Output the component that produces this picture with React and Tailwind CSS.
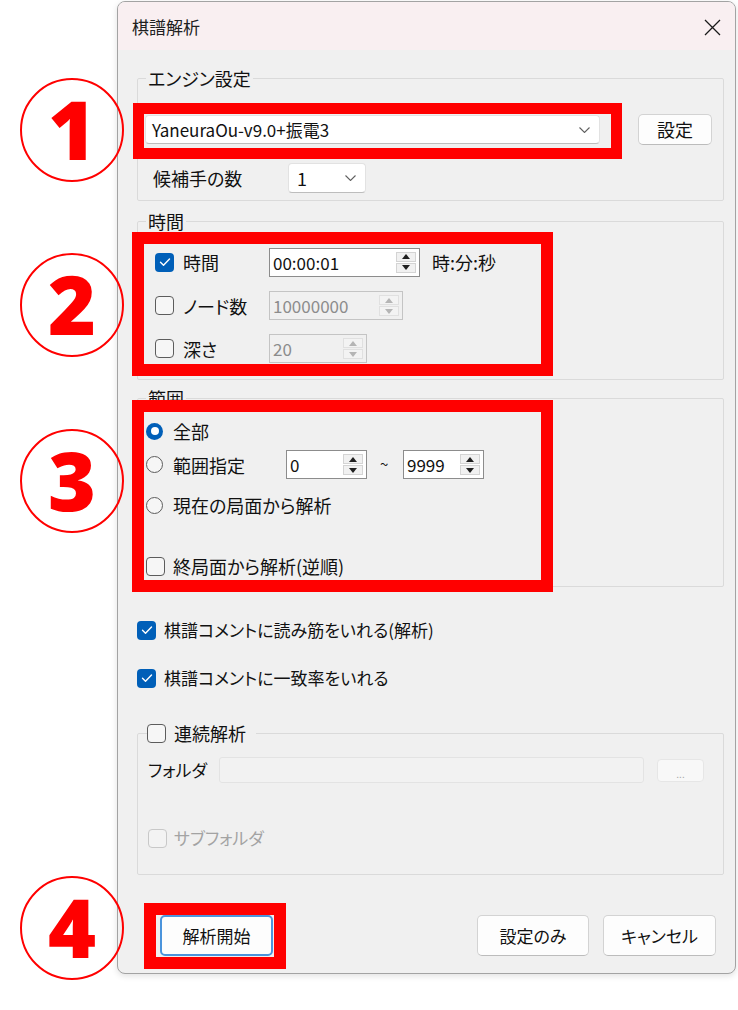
import React from "react";

const jp = "font-['Noto_Sans_CJK_JP','Noto_Sans',sans-serif] [font-feature-settings:'palt']";

function CheckBox({ checked, disabled }) {
  if (checked) {
    return (
      <span className="flex h-[19px] w-[19px] shrink-0 items-center justify-center rounded-[4px] bg-[#005fb8]">
        <svg width="12" height="10" viewBox="0 0 12 10" fill="none">
          <path d="M1.5 5.2l3 3L10.5 2" stroke="white" strokeWidth="1.4" strokeLinecap="round" strokeLinejoin="round" />
        </svg>
      </span>
    );
  }
  return (
    <span
      className={`block h-[19px] w-[19px] shrink-0 rounded-[4px] border ${
        disabled ? "border-[#c8c8c8] bg-[#f3f3f3]" : "border-[#5c5c5c] bg-[#f6f6f6]"
      }`}
    />
  );
}

function Radio({ checked }) {
  if (checked) {
    return (
      <span className="flex h-[17px] w-[17px] shrink-0 items-center justify-center rounded-full bg-[#005fb8]">
        <span className="h-[8px] w-[8px] rounded-full bg-white" />
      </span>
    );
  }
  return <span className="block h-[17px] w-[17px] shrink-0 rounded-full border border-[#5c5c5c] bg-[#f6f6f6]" />;
}

function Arrow({ up, disabled }) {
  return (
    <span
      className={`flex flex-1 items-center justify-center border ${
        disabled ? "border-[#e0e0e0] bg-[#f3f3f3]" : "border-[#d4d4d4] bg-[#f1f1f1]"
      }`}
    >
      <svg width="8" height="5" viewBox="0 0 8 5">
        <path d={up ? "M0 5L4 0L8 5Z" : "M0 0L4 5L8 0Z"} fill={disabled ? "#b5b5b5" : "#202020"} />
      </svg>
    </span>
  );
}

function Spin({ value, w, disabled }) {
  return (
    <div
      className={`flex h-[29px] ${w} items-stretch border ${
        disabled ? "border-[#c4c4c4] bg-[#f0f0f0] text-[#8c8c8c]" : "border-[#8c8c8c] bg-white text-[#111]"
      }`}
    >
      <span className="flex-1 pl-[3px] text-[17px] leading-[27px]">{value}</span>
      <div className="my-[3px] mr-[3px] flex w-[20px] flex-col gap-[1px]">
        <Arrow up disabled={disabled} />
        <Arrow disabled={disabled} />
      </div>
    </div>
  );
}

function Chevron() {
  return (
    <svg width="11" height="6" viewBox="0 0 11 6" fill="none">
      <path d="M0.5 0.5L5.5 5.5L10.5 0.5" stroke="#616161" strokeWidth="1.1" />
    </svg>
  );
}

function Button({ children, w, primary }) {
  return (
    <button
      type="button"
      className={`flex h-[41px] ${w} items-center justify-center rounded-[5px] bg-[#fdfdfd] text-[17px] text-[#111] ${
        primary ? "border-2 border-[#4b94dc]" : "border border-[#d3d3d3] border-b-[#bcbcbc]"
      }`}
    >
      {children}
    </button>
  );
}

function Circled({ n, top }) {
  return (
    <div
      className={`absolute left-[20px] ${top} flex h-[104px] w-[104px] items-center justify-center rounded-full border-[2.5px] border-[#ff0000] pb-[4px] font-['Noto_Sans','DejaVu_Sans',sans-serif] text-[82px] font-black leading-none text-[#ff0000]`}
    >
      {n}
    </div>
  );
}

export default function App() {
  return (
    <div className={`relative h-[1010px] w-[738px] overflow-hidden bg-white text-[#111] ${jp}`}>
      {/* dialog */}
      <div className="ml-[117px] mt-[1px] flex h-[973px] w-[619px] flex-col overflow-hidden rounded-[8px] border border-[#a3a3a3] bg-[#f0f0f0] shadow-[0_2px_6px_rgba(0,0,0,0.12)]">
        <div className="flex h-[48px] shrink-0 items-center justify-between bg-[#f9eff1] pl-[14px] pr-[14px] pt-[2px]">
          <span className="text-[17px] text-[#202020]">棋譜解析</span>
          <svg width="17" height="17" viewBox="0 0 17 17" fill="none">
            <path d="M1 1L16 16M16 1L1 16" stroke="#1a1a1a" strokeWidth="1.3" />
          </svg>
        </div>

        <div className="flex flex-col pl-[19px] pr-[11px] pt-[18px]">
          {/* エンジン設定 */}
          <fieldset className="rounded-[2px] border border-[#dadada] px-[7px] pb-[7px]">
            <legend className="ml-[1px] px-[2px] text-[18px] leading-[20px]">エンジン設定</legend>
            <div className="mt-[26px] flex items-center">
              <div className="flex h-[29px] w-[455px] items-center justify-between rounded-[4px] border border-[#e2e2e2] border-b-[#bdbdbd] bg-white pl-[6px] pr-[9px]">
                <span className="text-[17px] leading-none">YaneuraOu-v9.0+振電3</span>
                <Chevron />
              </div>
              <div className="ml-[38px] flex h-[31px] w-[74px] items-center justify-center rounded-[5px] border border-[#d3d3d3] border-b-[#bcbcbc] bg-[#fdfdfd] text-[18px]">
                設定
              </div>
            </div>
            <div className="mt-[18px] flex items-center">
              <span className="ml-[8px] w-[135px] text-[18px] leading-[20px]">候補手の数</span>
              <div className="flex h-[30px] w-[78px] items-center justify-between rounded-[4px] border border-[#e2e2e2] border-b-[#bdbdbd] bg-white pl-[8px] pr-[9px]">
                <span className="text-[18px] leading-none">1</span>
                <Chevron />
              </div>
            </div>
          </fieldset>

          {/* 時間 */}
          <fieldset className="mt-[10px] rounded-[2px] border border-[#dadada] px-[7px] pb-[16px]">
            <legend className="ml-[1px] px-[2px] text-[18px] leading-[20px]">時間</legend>
            <div className="mt-[16px] flex h-[30px] items-center">
              <div className="ml-[10px] flex w-[114px] items-center gap-[9px]">
                <CheckBox checked />
                <span className="text-[18px] leading-[20px]">時間</span>
              </div>
              <Spin value="00:00:01" w="w-[151px]" />
              <span className="ml-[12px] text-[18px] leading-[20px]">時:分:秒</span>
            </div>
            <div className="mt-[14px] flex items-center">
              <div className="ml-[10px] flex w-[114px] items-center gap-[9px]">
                <CheckBox />
                <span className="text-[18px] leading-[20px]">ノード数</span>
              </div>
              <Spin value="10000000" w="w-[134px]" disabled />
            </div>
            <div className="mt-[14px] flex items-center">
              <div className="ml-[10px] flex w-[114px] items-center gap-[9px]">
                <CheckBox />
                <span className="text-[18px] leading-[20px]">深さ</span>
              </div>
              <Spin value="20" w="w-[98px]" disabled />
            </div>
          </fieldset>

          {/* 範囲 */}
          <fieldset className="mt-[8px] rounded-[2px] border border-[#dadada] px-[7px] pb-[10px]">
            <legend className="ml-[1px] px-[2px] text-[18px] leading-[20px]">範囲</legend>
            <div className="ml-[1px] mt-[13px] flex h-[20px] items-center gap-[10px]">
              <Radio checked />
              <span className="text-[18px] leading-[20px]">全部</span>
            </div>
            <div className="ml-[1px] mt-[9px] flex items-center">
              <div className="flex w-[140px] items-center gap-[10px]">
                <Radio />
                <span className="text-[18px] leading-[20px]">範囲指定</span>
              </div>
              <Spin value="0" w="w-[81px]" />
              <span className="w-[36px] pl-[13px] text-[15px]">~</span>
              <Spin value="9999" w="w-[81px]" />
            </div>
            <div className="ml-[1px] mt-[16px] flex h-[20px] items-center gap-[10px]">
              <Radio />
              <span className="text-[18px] leading-[20px]">現在の局面から解析</span>
            </div>
            <div className="ml-[1px] mt-[41px] flex h-[20px] items-center gap-[8px]">
              <CheckBox />
              <span className="text-[18px] leading-[20px]">終局面から解析(逆順)</span>
            </div>
          </fieldset>

          <div className="mt-[33px] flex h-[20px] items-center gap-[8px]">
            <CheckBox checked />
            <span className="text-[17px] leading-[20px]">棋譜コメントに読み筋をいれる(解析)</span>
          </div>
          <div className="mt-[28px] flex h-[20px] items-center gap-[8px]">
            <CheckBox checked />
            <span className="text-[17px] leading-[20px]">棋譜コメントに一致率をいれる</span>
          </div>

          {/* 連続解析 */}
          <fieldset className="mt-[35px] h-[152px] rounded-[2px] border border-[#dadada] pl-[10px]">
            <legend className="-ml-[1px] flex h-[20px] items-center gap-[8px] pr-[10px]">
              <CheckBox />
              <span className="text-[18px] leading-[20px]">連続解析</span>
            </legend>
            <div className="mt-[14px] flex items-center">
              <span className="w-[71px] text-[17px] leading-[20px]">フォルダ</span>
              <div className="h-[26px] w-[425px] rounded-[3px] border border-[#e3e3e3] bg-[#f2f2f2]" />
              <div className="ml-[13px] flex h-[23px] w-[47px] items-end justify-center rounded-[4px] border border-[#e6e6e6] bg-[#f8f8f8] pb-[2px] text-[10px] leading-none text-[#a8a8a8]">
                ...
              </div>
            </div>
            <div className="mt-[45px] flex h-[20px] items-center gap-[7px]">
              <CheckBox disabled />
              <span className="text-[17px] leading-[20px] text-[#a3a3a3]">サブフォルダ</span>
            </div>
          </fieldset>

          <div className="mt-[40px] flex items-center pr-[8px]">
            <div className="ml-[23px]">
              <Button w="w-[113px]" primary>
                解析開始
              </Button>
            </div>
            <div className="ml-auto flex gap-[14px]">
              <Button w="w-[112px]">設定のみ</Button>
              <Button w="w-[113px]">キャンセル</Button>
            </div>
          </div>
        </div>
      </div>

      {/* annotations */}
      <div className="absolute left-[133px] top-[103px] h-[56px] w-[489px] border-[11px] border-[#ff0000]" />
      <div className="absolute left-[132px] top-[232px] h-[144px] w-[421px] border-[12px] border-[#ff0000]" />
      <div className="absolute left-[132px] top-[400px] h-[192px] w-[421px] border-[12px] border-[#ff0000]" />
      <div className="absolute left-[144px] top-[903px] h-[66px] w-[142px] border-[12px] border-[#ff0000]" />

      <Circled n="1" top="top-[78px]" />
      <Circled n="2" top="top-[253px]" />
      <Circled n="3" top="top-[429px]" />
      <Circled n="4" top="top-[876px]" />
    </div>
  );
}
